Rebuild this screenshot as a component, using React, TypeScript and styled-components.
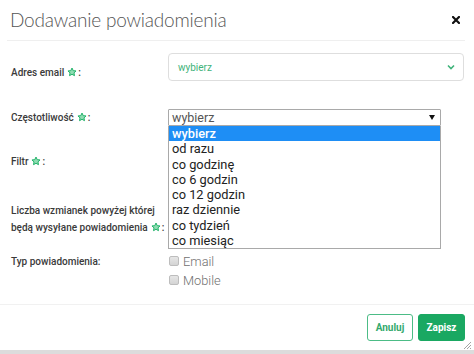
import React from "react";
import styled, { createGlobalStyle } from "styled-components";

const Global = createGlobalStyle`
  html, body { margin: 0; padding: 0; background: #fff; }
  body { width: 474px; height: 354px; overflow: hidden; font-family: Roboto, "Liberation Sans", sans-serif; }
`;

const Modal = styled.div`
  position: relative;
  width: 474px;
  height: 354px;
  display: flex;
  flex-direction: column;
  background: #fff;
`;

const Header = styled.div`
  height: 40px;
  margin: 0 9px 0 7px;
  border-bottom: 1px solid #efefef;
  display: flex;
  align-items: center;
  justify-content: space-between;
  padding: 0 4px 0 3px;
`;

const Title = styled.h1`
  margin: 0;
  font-family: Lato, "Open Sans", sans-serif;
  font-weight: 300;
  font-size: 19px;
  color: #555;
  letter-spacing: -0.2px;
  padding-bottom: 2px;
`;

const CloseBtn = styled.button`
  border: 0;
  background: none;
  padding: 0;
  width: 10px;
  height: 10px;
  display: flex;
  align-items: center;
  justify-content: center;
`;

const Body = styled.div`
  padding: 0 10px 0 11px;
  display: flex;
  flex-direction: column;
`;

const Row = styled.div<{ $mt: number }>`
  display: flex;
  align-items: flex-start;
  margin-top: ${(p) => p.$mt}px;
`;

const Label = styled.div<{ $pt?: number; $lh?: number }>`
  width: 157px;
  flex: none;
  padding-top: ${(p) => p.$pt ?? 0}px;
  font-size: 10px;
  font-weight: 500;
  color: #3a3a3a;
  line-height: ${(p) => p.$lh ?? 14}px;
`;

const Star = () => (
  <svg width="10" height="10" viewBox="0 0 24 24" style={{ margin: "0 1px 0 3px", verticalAlign: "-1px" }}>
    <path
      d="M12 2.5l2.9 6.2 6.8.8-5 4.6 1.3 6.7L12 17.5l-6 3.3 1.3-6.7-5-4.6 6.8-.8z"
      fill="#8fdcb2"
      stroke="#22b36a"
      strokeWidth="2.4"
      strokeLinejoin="round"
    />
  </svg>
);

const Field = styled.div`
  position: relative;
  flex: 1;
`;

const FancySelect = styled.div`
  height: 28px;
  box-sizing: border-box;
  border: 1px solid #dedede;
  border-radius: 4px;
  display: flex;
  align-items: center;
  justify-content: space-between;
  padding: 0 8px 0 9px;
  font-size: 10px;
  color: #3fb37a;
`;

const NativeSelect = styled.div`
  width: 273px;
  height: 17px;
  box-sizing: border-box;
  border: 1px solid #a9a9a9;
  border-radius: 1px;
  display: flex;
  align-items: center;
  justify-content: space-between;
  padding: 0 4px 0 3px;
  font-size: 12.5px;
  color: #555;
  background: #fff;
`;

const Arrow = styled.span`
  width: 0;
  height: 0;
  border-left: 3px solid transparent;
  border-right: 3px solid transparent;
  border-top: 5px solid #111;
  margin-right: 1px;
`;

const List = styled.div`
  position: absolute;
  top: 17px;
  left: 0;
  width: 273px;
  box-sizing: border-box;
  border: 1px solid #a9a9a9;
  border-top: 0;
  background: #fff;
  z-index: 5;
`;

const Option = styled.div<{ $active?: boolean }>`
  height: 15.3px;
  line-height: 15.3px;
  padding-left: 3px;
  font-size: 12.8px;
  color: ${(p) => (p.$active ? "#fff" : "#222")};
  background: ${(p) => (p.$active ? "#1e8ef5" : "transparent")};
  font-weight: ${(p) => (p.$active ? 500 : 400)};
`;

const Checks = styled.div`
  display: flex;
  flex-direction: column;
`;

const CheckRow = styled.label`
  display: flex;
  align-items: center;
  height: 19px;
  font-size: 12.8px;
  color: #6f6f6f;
  font-weight: 300;
`;

const Box = styled.span`
  width: 10px;
  height: 10px;
  box-sizing: border-box;
  border: 1px solid #bdbdbd;
  border-radius: 2px;
  background: linear-gradient(#e6e6e6, #d4d4d4);
  margin: 0 4px 1px 1px;
`;

const Footer = styled.div`
  margin-top: 14px;
  border-top: 1px solid #f1f1f1;
  display: flex;
  justify-content: flex-end;
  gap: 5px;
  padding: 9px 9px 0 0;
  flex: 1;
`;

const Button = styled.button<{ $primary?: boolean }>`
  height: 27px;
  width: ${(p) => (p.$primary ? 47 : 46)}px;
  box-sizing: border-box;
  border-radius: 3px;
  border: 1px solid ${(p) => (p.$primary ? "#1aa862" : "#4cbc86")};
  background: ${(p) => (p.$primary ? "#1aa862" : "#fff")};
  color: ${(p) => (p.$primary ? "#fff" : "#34a96d")};
  font-family: Roboto, "Liberation Sans", sans-serif;
  font-weight: 700;
  font-size: 10px;
  padding: 0;
`;

const BottomBar = styled.div`
  height: 4px;
  background: #dcdcdc;
  flex: none;
`;

const Grip = styled.svg`
  position: absolute;
  right: 2px;
  bottom: 4px;
`;

const options = ["wybierz", "od razu", "co godzinę", "co 6 godzin", "co 12 godzin", "raz dziennie", "co tydzień", "co miesiąc"];

export default function App() {
  return (
    <Modal>
      <Global />
      <Header>
        <Title>Dodawanie powiadomienia</Title>
        <CloseBtn aria-label="close">
          <svg width="8" height="8" viewBox="0 0 8 8">
            <path d="M1 1L7 7M7 1L1 7" stroke="#111" strokeWidth="2.2" strokeLinecap="square" />
          </svg>
        </CloseBtn>
      </Header>
      <Body>
        <Row $mt={12}>
          <Label $pt={13}>
            Adres email<Star />:
          </Label>
          <Field>
            <FancySelect>
              <span>wybierz</span>
              <svg width="8" height="6" viewBox="0 0 8 6">
                <path d="M1 1.5L4 4.5L7 1.5" stroke="#3fb37a" strokeWidth="1.6" fill="none" />
              </svg>
            </FancySelect>
          </Field>
        </Row>
        <Row $mt={28}>
          <Label $pt={2}>
            Częstotliwość<Star />:
          </Label>
          <Field>
            <NativeSelect>
              <span>wybierz</span>
              <Arrow />
            </NativeSelect>
            <List>
              {options.map((o, i) => (
                <Option key={o} $active={i === 0}>
                  {o}
                </Option>
              ))}
            </List>
          </Field>
        </Row>
        <Row $mt={29}>
          <Label>
            Filtr<Star />:
          </Label>
        </Row>
        <Row $mt={33}>
          <Label $lh={17}>
            Liczba wzmianek powyżej której
            <br />
            będą wysyłane powiadomienia<Star />:
          </Label>
        </Row>
        <Row $mt={16}>
          <Label $lh={19}>Typ powiadomienia:</Label>
          <Checks>
            <CheckRow>
              <Box />
              Email
            </CheckRow>
            <CheckRow>
              <Box />
              Mobile
            </CheckRow>
          </Checks>
        </Row>
      </Body>
      <Footer>
        <Button>Anuluj</Button>
        <Button $primary>Zapisz</Button>
      </Footer>
      <BottomBar />
      <Grip width="10" height="10" viewBox="0 0 10 10">
        <path d="M9 2L2 9M9 5L5 9M9 8L8 9" stroke="#9a9a9a" strokeWidth="0.9" />
      </Grip>
    </Modal>
  );
}
